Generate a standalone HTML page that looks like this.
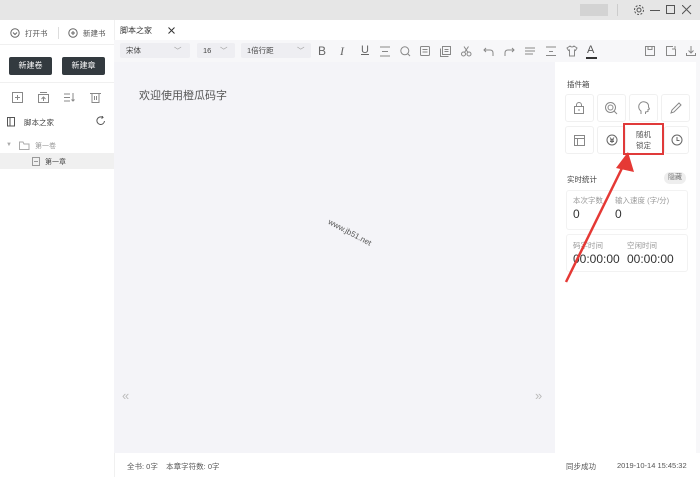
<!DOCTYPE html>
<html><head><meta charset="utf-8"><style>
*{margin:0;padding:0;box-sizing:border-box}
body{width:700px;height:477px;overflow:hidden;position:relative;background:#fff;font-family:"Liberation Sans","Noto Sans CJK SC",sans-serif;color:#333;font-size:8px}
.a{position:absolute}
.tile{position:absolute;width:29px;height:28px;border:1px solid #f0f0f0;border-radius:3px;display:flex;align-items:center;justify-content:center}
.btn{position:absolute;background:#333a3f;color:#fff;font-size:8px;border-radius:2px;text-align:center;line-height:18px}
.sel{position:absolute;background:#eeeef2;border-radius:2px;height:15px;top:43px;font-size:7.5px;color:#444;line-height:15px;padding-left:6px}
svg.i{position:absolute;fill:none;stroke:#888;stroke-width:1}
</style></head><body>
<div class="a" style="left:0;top:0;width:700px;height:20px;background:#e6e6e6"></div>
<div class="a" style="left:580px;top:4px;width:28px;height:12px;background:#d3d3d3"></div>
<div class="a" style="left:617px;top:4px;width:1px;height:12px;background:#ccc"></div>
<svg class="i" style="left:633px;top:4px;stroke:#555" width="12" height="12"><circle cx="6" cy="6" r="2"/><circle cx="6" cy="6" r="4.5" stroke-dasharray="2 1.5"/></svg>
<div class="a" style="left:650px;top:10px;width:10px;height:1px;background:#555"></div>
<div class="a" style="left:666px;top:5px;width:9px;height:9px;border:1px solid #555"></div>
<svg class="i" style="left:682px;top:5px;stroke:#555" width="10" height="10"><path d="M0 0L9 9M9 0L0 9"/></svg>

<!-- left sidebar -->
<svg class="i" style="left:10px;top:28px;stroke:#666" width="10" height="10"><circle cx="5" cy="5" r="4.2"/><path d="M3 4.5L5 6.5L7 4.5"/></svg>
<div class="a" style="left:25px;top:28px;font-size:7.5px;color:#555">打开书</div>
<div class="a" style="left:58px;top:27px;width:1px;height:12px;background:#ddd"></div>
<svg class="i" style="left:68px;top:28px;stroke:#666" width="10" height="10"><circle cx="5" cy="5" r="4.2"/><path d="M5 3V7M3 5H7"/></svg>
<div class="a" style="left:83px;top:28px;font-size:7.5px;color:#555">新建书</div>
<div class="a" style="left:0;top:44px;width:114px;height:1px;background:#f0f0f0"></div>
<div class="btn" style="left:9px;top:57px;width:43px">新建卷</div>
<div class="btn" style="left:62px;top:57px;width:43px">新建章</div>
<div class="a" style="left:0;top:82px;width:114px;height:1px;background:#f0f0f0"></div>
<svg class="i" style="left:12px;top:92px" width="12" height="12"><rect x="0.5" y="0.5" width="10" height="10"/><path d="M5.5 3V8M3 5.5H8"/></svg>
<svg class="i" style="left:38px;top:92px" width="12" height="12"><rect x="0.5" y="2.5" width="10" height="8"/><path d="M2 0.5H9M5.5 9V5M3.5 7L5.5 5L7.5 7"/></svg>
<svg class="i" style="left:64px;top:92px" width="12" height="12"><path d="M0 2H6M0 5.5H6M0 9H6M9 1V9M7.5 7.5L9 9L10.5 7.5"/></svg>
<svg class="i" style="left:90px;top:92px" width="12" height="12"><path d="M0 1.5H11M2 1.5V10.5H9V1.5M4.5 4V8M6.5 4V8"/></svg>
<svg class="i" style="left:7px;top:117px;stroke:#555" width="9" height="10"><rect x="0.5" y="0.5" width="7" height="8.5"/><path d="M3 0.5V9"/></svg>
<div class="a" style="left:24px;top:117px;font-size:7.5px;color:#444">脚本之家</div>
<svg class="i" style="left:96px;top:116px;stroke:#555" width="10" height="10"><path d="M8.5 5A3.8 3.8 0 1 1 6.5 1.3M6 0L7 1.5L5.5 2.5"/></svg>
<div class="a" style="left:6px;top:142px;font-size:6px;color:#aaa">▼</div>
<svg class="i" style="left:19px;top:141px;stroke:#aaa" width="11" height="9"><path d="M0.5 1V8.5H10V3H5L4 1Z"/></svg>
<div class="a" style="left:35px;top:141px;font-size:7px;color:#999">第一卷</div>
<div class="a" style="left:0;top:153px;width:114px;height:16px;background:#f0f0f0"></div>
<svg class="i" style="left:32px;top:157px;stroke:#999" width="8" height="9"><rect x="0.5" y="0.5" width="7" height="8"/><path d="M2 4.5H6"/></svg>
<div class="a" style="left:45px;top:157px;font-size:7px;color:#444">第一章</div>

<!-- tab bar -->
<div class="a" style="left:114px;top:20px;width:586px;height:20px;background:#fff;border-left:1px solid #f0f0f0"></div>
<div class="a" style="left:120px;top:25px;font-size:8px;color:#333">脚本之家</div>
<svg class="i" style="left:168px;top:27px;stroke:#333" width="7" height="7"><path d="M0.5 0.5L6.5 6.5M6.5 0.5L0.5 6.5"/></svg>
<!-- toolbar -->
<div class="a" style="left:114px;top:40px;width:586px;height:22px;background:#f7f7f9"></div>
<div class="sel" style="left:120px;width:70px">宋体<span style="position:absolute;left:54px;color:#999">﹀</span></div>
<div class="sel" style="left:197px;width:38px">16<span style="position:absolute;left:23px;color:#999">﹀</span></div>
<div class="sel" style="left:241px;width:70px">1倍行距<span style="position:absolute;left:56px;color:#999">﹀</span></div>
<div class="a" style="left:318px;top:44px;font-size:12px;color:#666">B</div>
<div class="a" style="left:340px;top:44px;font-size:12px;font-style:italic;font-family:'Liberation Serif';color:#666">I</div>
<div class="a" style="left:361px;top:44px;font-size:11px;text-decoration:underline;color:#666">U</div>
<svg class="i" style="left:380px;top:46px" width="11" height="11"><path d="M0 1H10M2 5.5H8M0 10H10"/></svg>
<svg class="i" style="left:400px;top:46px" width="11" height="11"><circle cx="4.8" cy="4.8" r="4"/><path d="M7.5 7.5L10 10"/></svg>
<svg class="i" style="left:420px;top:46px" width="11" height="11"><rect x="0.5" y="0.5" width="9" height="9" rx="1"/><path d="M2.5 3.5H7.5M2.5 6H7.5"/></svg>
<svg class="i" style="left:440px;top:46px" width="11" height="11"><rect x="2.5" y="0.5" width="8" height="8"/><path d="M0.5 2.5V10.5H8.5M4.5 3.5H8.5M4.5 5.5H8.5"/></svg>
<svg class="i" style="left:461px;top:46px" width="11" height="11"><circle cx="2.5" cy="8" r="2"/><circle cx="8" cy="8" r="2"/><path d="M3.5 6.5L7.5 0.5M7 6.5L3 0.5"/></svg>
<svg class="i" style="left:483px;top:46px" width="11" height="11"><path d="M1 4H7Q10 4 10 7V10M3 2L1 4L3 6"/></svg>
<svg class="i" style="left:504px;top:46px" width="11" height="11"><path d="M10 4H4Q1 4 1 7V10M8 2L10 4L8 6"/></svg>
<svg class="i" style="left:525px;top:46px" width="11" height="11"><path d="M0 2H10M0 5H10M0 8H8"/></svg>
<svg class="i" style="left:546px;top:46px" width="11" height="11"><path d="M0 1H10M0 9.5H10M3 5.5H7"/></svg>
<svg class="i" style="left:566px;top:45px" width="12" height="12"><path d="M4 1L1 3L2.5 5.5L3.5 5V11H8.5V5L9.5 5.5L11 3L8 1Q6 3 4 1Z"/></svg>
<div class="a" style="left:587px;top:44px;font-size:11px;color:#555">A</div>
<div class="a" style="left:586px;top:57px;width:11px;height:2px;background:#333"></div>
<svg class="i" style="left:645px;top:46px" width="11" height="11"><rect x="0.5" y="0.5" width="9" height="9"/><path d="M3 0.5V3.5H7V0.5"/></svg>
<svg class="i" style="left:666px;top:46px" width="11" height="11"><path d="M7 0.5H0.5V9.5H9.5V3M6 3H9V0"/></svg>
<svg class="i" style="left:686px;top:46px" width="11" height="11"><path d="M5 0V7M2.5 4.5L5 7L7.5 4.5M0.5 7V9.5H9.5V7"/></svg>

<!-- editor -->
<div class="a" style="left:114px;top:62px;width:441px;height:391px;background:#f4f4f8"></div>
<div class="a" style="left:139px;top:87px;font-size:11px;color:#555">欢迎使用橙瓜码字</div>
<div class="a" style="left:326px;top:228px;font-size:8px;color:#555;transform:rotate(28deg)">www.jb51.net</div>
<div class="a" style="left:122px;top:388px;font-size:13px;color:#bbb">«</div>
<div class="a" style="left:535px;top:388px;font-size:13px;color:#bbb">»</div>

<!-- right panel -->
<div class="a" style="left:555px;top:62px;width:145px;height:391px;background:#fff;border-right:4px solid #f7f7f9"></div>
<div class="a" style="left:567px;top:79px;font-size:7.5px;color:#444">插件箱</div>
<div class="tile" style="left:565px;top:94px"><svg class="i" style="position:static" width="11" height="12"><rect x="0.5" y="4.5" width="9" height="7"/><path d="M2.5 4.5V3A2.5 2.5 0 0 1 7.5 3V4.5M5 7V9"/></svg></div>
<div class="tile" style="left:597px;top:94px"><svg class="i" style="position:static" width="13" height="13"><circle cx="5.5" cy="5.5" r="5"/><circle cx="5.5" cy="5.5" r="2.5"/><path d="M9 9L12 12"/></svg></div>
<div class="tile" style="left:629px;top:94px"><svg class="i" style="position:static" width="12" height="14"><path d="M3 13V10Q0 8 1 4Q3 0 7 1Q11 2 10.5 6L11.5 8L10 8.5V10.5L7.5 11V13"/></svg></div>
<div class="tile" style="left:661px;top:94px"><svg class="i" style="position:static" width="12" height="12"><path d="M1 11L2 8L9 1L11 3L4 10Z"/></svg></div>
<div class="tile" style="left:565px;top:126px"><svg class="i" style="position:static" width="11" height="11"><rect x="0.5" y="0.5" width="10" height="10"/><path d="M0.5 3.5H10.5M3.5 3.5V10.5"/></svg></div>
<div class="tile" style="left:597px;top:126px"><svg class="i" style="position:static;stroke:#666" width="12" height="12"><circle cx="6" cy="6" r="5"/><path d="M4 3.5L6 6L8 3.5M6 6V9M4 6H8M4 7.5H8"/></svg></div>
<div class="a" style="left:623px;top:123px;width:41px;height:32px;border:2px solid #e03a3a;font-size:7.5px;color:#555;text-align:center;line-height:11px;padding-top:4px">随机<br>锁定</div>
<div class="tile" style="left:664px;top:126px;width:25px"><svg class="i" style="position:static;stroke:#666" width="12" height="12"><circle cx="6" cy="6" r="5"/><path d="M6 3V6.5H8.5"/></svg></div>
<div class="a" style="left:567px;top:174px;font-size:7.5px;color:#444">实时统计</div>
<div class="a" style="left:664px;top:172px;width:22px;height:12px;background:#eee;border-radius:6px;font-size:7px;color:#777;text-align:center;line-height:12px">隐藏</div>
<div class="a" style="left:566px;top:190px;width:122px;height:40px;border:1px solid #f2f2f2;border-radius:3px"></div>
<div class="a" style="left:573px;top:195px;font-size:7.5px;color:#999">本次字数</div>
<div class="a" style="left:615px;top:195px;font-size:7.5px;color:#999">输入速度 (字/分)</div>
<div class="a" style="left:573px;top:207px;font-size:12px;color:#333">0</div>
<div class="a" style="left:615px;top:207px;font-size:12px;color:#333">0</div>
<div class="a" style="left:566px;top:234px;width:122px;height:38px;border:1px solid #f2f2f2;border-radius:3px"></div>
<div class="a" style="left:573px;top:240px;font-size:7.5px;color:#999">码字时间</div>
<div class="a" style="left:627px;top:240px;font-size:7.5px;color:#999">空闲时间</div>
<div class="a" style="left:573px;top:252px;font-size:12px;color:#333">00:00:00</div>
<div class="a" style="left:627px;top:252px;font-size:12px;color:#333">00:00:00</div>
<svg class="a" style="left:560px;top:150px" width="80" height="135"><line x1="6" y1="132" x2="66" y2="10" stroke="#e53935" stroke-width="2.5"/><polygon points="68,2 56,18 74,22" fill="#e53935"/></svg>

<!-- status -->
<div class="a" style="left:114px;top:453px;width:586px;height:24px;background:#fff;border-left:1px solid #f0f0f0"></div>
<div class="a" style="left:127px;top:461px;font-size:7.5px;color:#555">全书: 0字&nbsp;&nbsp;&nbsp;&nbsp;本章字符数: 0字</div>
<div class="a" style="left:566px;top:461px;font-size:7.5px;color:#555">同步成功</div>
<div class="a" style="left:617px;top:461px;font-size:7.5px;color:#555">2019-10-14 15:45:32</div>
</body></html>
